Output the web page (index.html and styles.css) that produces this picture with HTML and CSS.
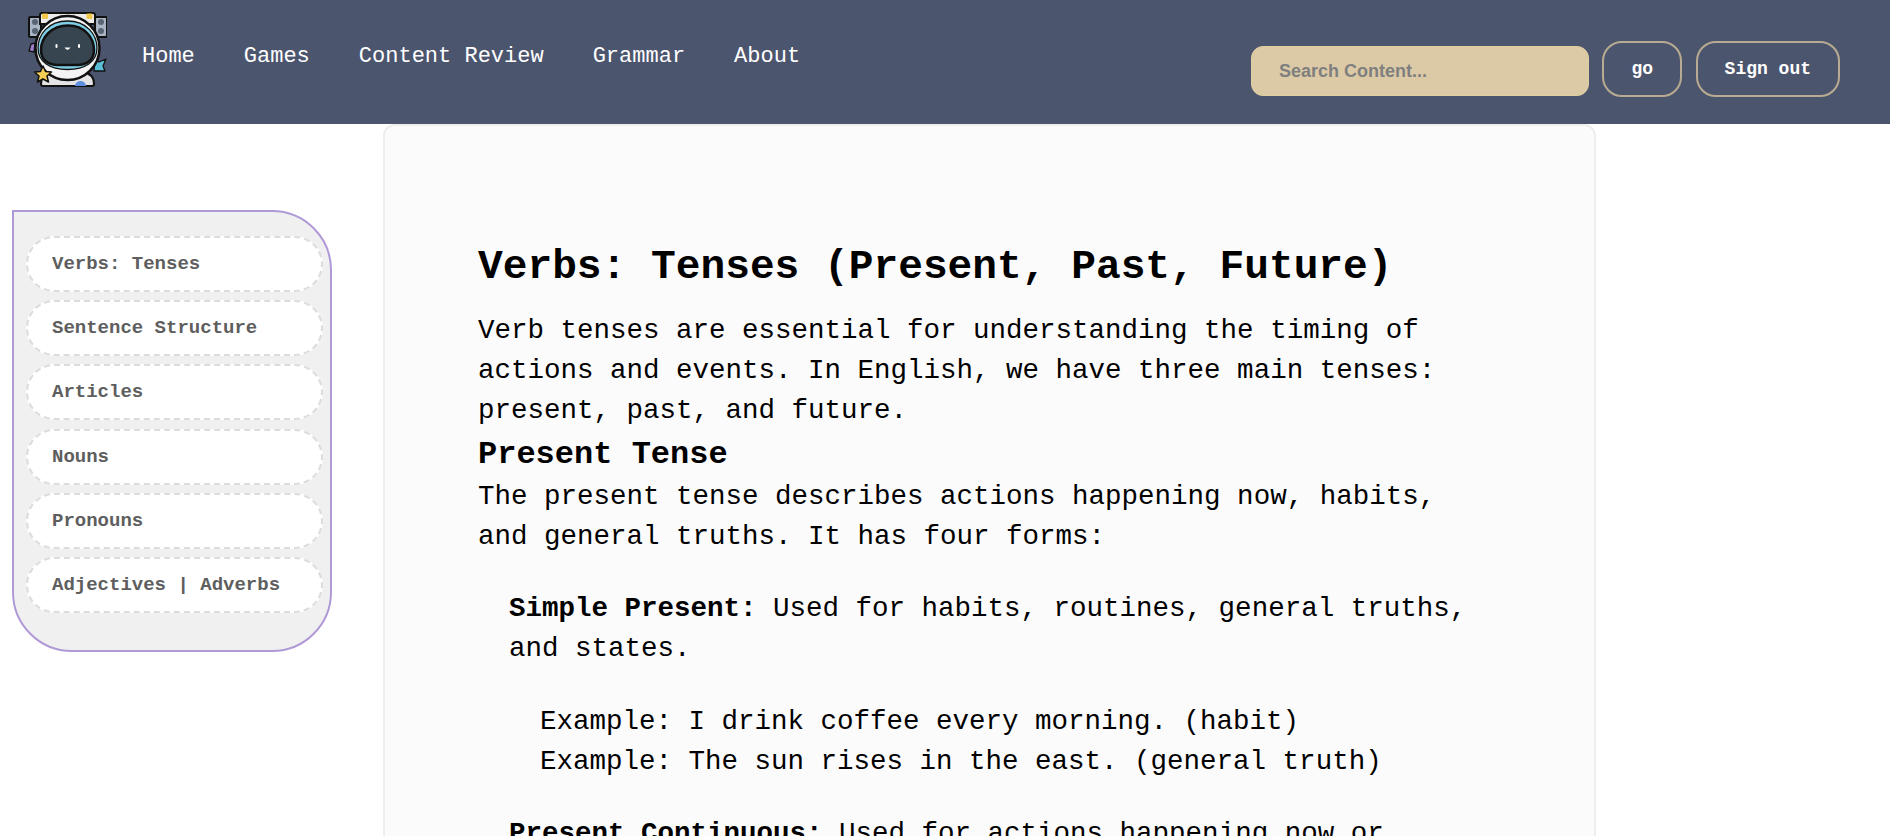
FILE: index.html
```html
<!DOCTYPE html>
<html lang="en">
  <head>
    <meta charset="UTF-8" />
    <meta name="viewport" content="width=device-width, initial-scale=1.0" />
    <title>Verbs: Tenses</title>
    <link rel="stylesheet" href="styles.css">
  </head>
  <body>
    <header class="topbar">
      <svg class="logo" viewBox="0 0 80 75" aria-label="Astronaut logo">
        <rect x="2" y="5" width="12" height="20" rx="1.500" fill="#a9b4c4" stroke="#111" stroke-width="2" />
        <rect x="68" y="5" width="12" height="20" rx="1.500" fill="#a9b4c4" stroke="#111" stroke-width="2" />
        <circle cx="8" cy="10" r="3" fill="#5a6473" />
        <circle cx="8" cy="19" r="3" fill="#5a6473" />
        <circle cx="74" cy="10" r="3" fill="#5a6473" />
        <circle cx="74" cy="19" r="3" fill="#5a6473" />
        <path d="M13 12 V3 Q13 1 15 1 H66 Q68 1 68 3 V12 Z" fill="#ececec" stroke="#111" stroke-width="2" />
        <rect x="15" y="1.500" width="6" height="5.500" rx="1" fill="#f2c94c" />
        <rect x="59.500" y="1.500" width="6" height="5.500" rx="1" fill="#f2c94c" />
        <path d="M4 32 L8 31 L7 40 L2 39 Z" fill="#a07fd0" stroke="#111" stroke-width="1.300" />
        <path d="M68 47 L72 50 L79 47 L76 54 L78 59 L67 59 Z" fill="#5bbcd6" stroke="#111" stroke-width="1.300" stroke-linejoin="round" />
        <path d="M14 72 Q14 62 26 60 H56 Q67 62 67 72 Q67 74 65 74 H16 Q14 74 14 72 Z" fill="#e4e4e4" stroke="#111" stroke-width="2" />
        <path d="M48 74 A5.500 5 0 0 1 59 74 Z" fill="#5c8fe0" />
        <circle cx="40.500" cy="36" r="32" fill="#f4f4f4" stroke="#111" stroke-width="2.500" />
        <path d="M40.500 9 C60 9 70 23 70 36 C70 50 58 57.500 40.500 57.500 C23 57.500 11 50 11 36 C11 23 21 9 40.500 9 Z" fill="#7fd0e6" stroke="#111" stroke-width="1.300" />
        <path d="M41 13.500 C58 13.500 67 26 67 38 C67 48 60 53 50 53 H31 C21 53 14 48 14 38 C14 26 24 13.500 41 13.500 Z" fill="#36454f" stroke="#111" stroke-width="2.500" />
        <rect x="28.500" y="32" width="2" height="4" rx="1" fill="#fff" />
        <rect x="51" y="32" width="2" height="4" rx="1" fill="#fff" />
        <path d="M37.500 35.500 Q40.500 40 43.500 35.500 Z" fill="#fff" />
        <path d="M16 54 L18.500 59.500 L24.500 60 L20 64 L21.500 70 L16 67 L10.500 70 L12 64 L7.500 60 L13.500 59.500 Z" fill="#f5cf55" stroke="#111" stroke-width="1.500" stroke-linejoin="round" />
      </svg>
      <nav class="nav">
        <a href="#">Home</a>
        <a href="#">Games</a>
        <a href="#">Content Review</a>
        <a href="#">Grammar</a>
        <a href="#">About</a>
      </nav>
      <form class="search">
        <input class="search-input" type="text" placeholder="Search Content..." />
        <button class="btn" type="button">go</button>
        <button class="btn" type="button">Sign out</button>
      </form>
    </header>

    <div class="layout">
      <aside class="sidebar">
        <a class="topic" href="#">Verbs: Tenses</a>
        <a class="topic" href="#">Sentence Structure</a>
        <a class="topic" href="#">Articles</a>
        <a class="topic" href="#">Nouns</a>
        <a class="topic" href="#">Pronouns</a>
        <a class="topic" href="#">Adjectives | Adverbs</a>
      </aside>

      <main class="card">
        <h1>Verbs: Tenses (Present, Past, Future)</h1>
        <p>Verb tenses are essential for understanding the timing of actions and events. In English, we have three main tenses: present, past, and future.</p>
        <h2>Present Tense</h2>
        <p>The present tense describes actions happening now, habits, and general truths. It has four forms:</p>
        <ul class="forms">
          <li>
            <p><strong>Simple Present:</strong> Used for habits, routines, general truths, and states.</p>
            <ul class="examples">
              <li>Example: I drink coffee every morning. (habit)</li>
              <li>Example: The sun rises in the east. (general truth)</li>
            </ul>
          </li>
          <li>
            <p><strong>Present Continuous:</strong> Used for actions happening now or</p>
          </li>
        </ul>
      </main>
    </div>
  </body>
</html>
```

FILE: styles.css
```css
html,
body {
  height: 836px;
  overflow: hidden;
}
body {
  margin: 0;
  background: #fff;
  font-family: "Liberation Mono", monospace;
  color: #000;
}
.topbar {
  display: flex;
  height: 124px;
  box-sizing: border-box;
  padding: 12px 50px 0 27px;
  background: #4c556e;
}
.logo {
  width: 80px;
  height: 75px;
  flex: none;
}
.nav {
  display: flex;
  gap: 49px;
  margin: 30px 0 0 35px;
}
.nav a {
  color: #fff;
  font-size: 22px;
  line-height: 30px;
  text-decoration: none;
}
.search {
  display: flex;
  align-items: flex-start;
  gap: 13.500px;
  margin: 29px 0 0 auto;
}
.search-input {
  width: 338px;
  height: 50px;
  box-sizing: border-box;
  margin-top: 5px;
  padding: 0 27px;
  border: 1px solid #e2cf9f;
  border-radius: 12px;
  background: #dccaa6;
  font-family: "Liberation Sans", sans-serif;
  font-size: 18px;
  font-weight: bold;
}
.search-input::placeholder {
  color: #7f7f7f;
  opacity: 1;
}
.btn {
  height: 56px;
  padding: 0 27px;
  border: 2px solid #b9ab91;
  border-radius: 20px;
  background: transparent;
  color: #fff;
  font-family: "Liberation Mono", monospace;
  font-size: 18px;
  font-weight: bold;
}
.layout {
  display: flex;
  align-items: flex-start;
  padding-left: 12px;
}
.sidebar {
  display: flex;
  flex-direction: column;
  gap: 8.200px;
  width: 320px;
  height: 442px;
  box-sizing: border-box;
  margin-top: 86px;
  padding: 24px 7px 0 12px;
  border: 2px solid #af99d6;
  border-radius: 0 60px 60px 60px;
  background: #f0f0f0;
}
.topic {
  display: flex;
  align-items: center;
  height: 56px;
  box-sizing: border-box;
  padding-left: 24px;
  border: 2px dashed #dcdcdc;
  border-radius: 28px;
  background: #fff;
  color: #5e5e5e;
  font-size: 19px;
  font-weight: bold;
  text-decoration: none;
}
.card {
  width: 1213px;
  height: 760px;
  box-sizing: border-box;
  margin-left: 51px;
  padding: 116px 120px 0 93px;
  border: 2px solid #eee;
  border-radius: 12px;
  background: #fbfbfb;
}
h1 {
  margin: 0 0 19px;
  font-size: 41.200px;
  line-height: 50px;
}
h2 {
  margin: 2px 0 0;
  font-size: 32px;
  line-height: 44px;
}
p {
  margin: 0;
  font-size: 27.500px;
  line-height: 40px;
}
.forms {
  margin: 32px 0 0;
  padding: 0 0 0 31px;
  list-style: none;
}
.forms > li {
  margin-bottom: 32px;
}
.examples {
  margin: 33px 0 0;
  padding: 0 0 0 31px;
  list-style: none;
  font-size: 27.500px;
  line-height: 40px;
}
```
